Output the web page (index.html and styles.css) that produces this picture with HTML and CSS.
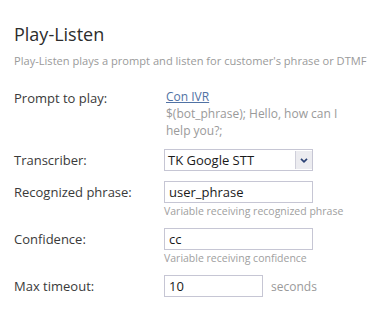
FILE: index.html
```html
<!DOCTYPE html>
<html>
<head>
<meta charset="utf-8">
<link rel="stylesheet" href="styles.css">
</head>
<body>
<div class="panel">
  <h1 class="title">Play-Listen</h1>
  <p class="subtitle">Play-Listen plays a prompt and listen for customer's phrase or DTMF</p>
  <div class="form">
    <div class="row">
      <div class="label">Prompt to play:</div>
      <div class="field prompt">
        <a class="link" href="#">Con IVR</a>
        <div class="prompt-text">$(bot_phrase); Hello, how can I help you?;</div>
      </div>
    </div>
    <div class="row">
      <div class="label">Transcriber:</div>
      <div class="field">
        <div class="select">
          <span class="select-value">TK Google STT</span>
          <span class="select-btn">
            <svg width="8" height="5" viewBox="0 0 8 5"><path d="M1 0.8 L4 3.8 L7 0.8" fill="none" stroke="#2b4275" stroke-width="1.7"/></svg>
          </span>
        </div>
      </div>
    </div>
    <div class="row">
      <div class="label">Recognized phrase:</div>
      <div class="field">
        <div class="input">user_phrase</div>
        <div class="hint">Variable receiving recognized phrase</div>
      </div>
    </div>
    <div class="row">
      <div class="label">Confidence:</div>
      <div class="field">
        <div class="input">cc</div>
        <div class="hint">Variable receiving confidence</div>
      </div>
    </div>
    <div class="row">
      <div class="label">Max timeout:</div>
      <div class="field inline">
        <div class="input short">10</div>
        <span class="unit">seconds</span>
      </div>
    </div>
  </div>
</div>
</body>
</html>
```
FILE: styles.css
```css
html, body {
  margin: 0;
  padding: 0;
  background: #ffffff;
}
body {
  font-family: "Open Sans", "DejaVu Sans", sans-serif;
  color: #333333;
}
.panel {
  padding: 22px 14px 0 14px;
}
.title {
  margin: 0;
  font-size: 18px;
  font-weight: 400;
  line-height: 24px;
  color: #2d2d2d;
}
.subtitle {
  margin: 7px 0 0 0;
  font-size: 11.1px;
  line-height: 15px;
  color: #9a9a9a;
}
.form {
  margin-top: 19px;
  display: flex;
  flex-direction: column;
  gap: 10px;
}
.row {
  display: grid;
  grid-template-columns: 150px 1fr;
  align-items: start;
}
.label {
  font-size: 13px;
  line-height: 22px;
  color: #3a3a3a;
}
.prompt {
  padding-top: 2px;
  padding-left: 2px;
}
.link {
  display: block;
  font-size: 12px;
  line-height: 16px;
  color: #5072a4;
  text-decoration: underline;
}
.prompt-text {
  font-size: 12px;
  line-height: 17px;
  color: #9a9a9a;
  width: 180px;
}
.select {
  width: 149px;
  height: 22px;
  box-sizing: border-box;
  border: 1px solid #c6c6d4;
  display: flex;
  align-items: stretch;
}
.select-value {
  flex: 1;
  padding-left: 3px;
  font-size: 13px;
  line-height: 20px;
  color: #1a1a1a;
}
.select-btn {
  width: 16px;
  margin: 1px 0 1px 0;
  background: #ececf0;
  border-left: 1px solid #cfcfda;
  display: flex;
  align-items: center;
  justify-content: center;
}
.input {
  width: 149px;
  height: 22px;
  box-sizing: border-box;
  border: 1px solid #c6c6d4;
  padding-left: 4px;
  font-size: 13px;
  line-height: 20px;
  color: #1a1a1a;
}
.input.short {
  width: 99px;
}
.hint {
  margin-top: 2px;
  font-size: 10.5px;
  line-height: 13px;
  color: #a0a0a0;
}
.inline {
  display: flex;
  align-items: center;
  gap: 8px;
}
.unit {
  font-size: 12px;
  color: #9a9a9a;
}
```
